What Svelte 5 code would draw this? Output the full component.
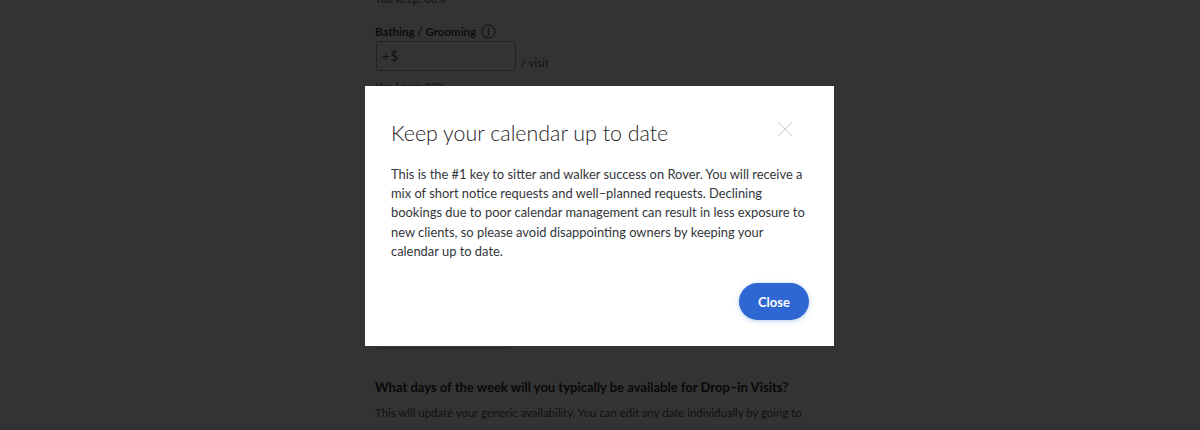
<script>
	const body =
		'This is the #1 key to sitter and walker success on Rover. You will receive a mix of short notice requests and well–planned requests. Declining bookings due to poor calendar management can result in less exposure to new clients, so please avoid disappointing owners by keeping your calendar up to date.';
</script>

<div class="page">
	<p class="keep keep--top">You keep: 80%</p>
	<div class="label">
		Bathing / Grooming
		<svg class="info" viewBox="0 0 16 16" width="15" height="15" aria-hidden="true">
			<circle cx="8" cy="8" r="7" fill="none" stroke="currentColor" stroke-width="1" />
			<path d="M8 7v4.5M6.8 11.5h2.4M7 7h1" fill="none" stroke="currentColor" stroke-width="1" />
			<circle cx="8" cy="4.8" r="0.8" fill="currentColor" />
		</svg>
	</div>
	<div class="rate">
		<div class="input"><span class="input__plus">+</span>$</div>
		<span class="unit">/ visit</span>
	</div>
	<p class="keep">You keep: 80%</p>
	<div class="spacer"></div>
	<div class="input input--ghost"></div>
	<h2>What days of the week will you typically be available for Drop–in Visits?</h2>
	<p class="hint">
		This will update your generic availability. You can edit any date individually by going to
		your calendar.
	</p>
</div>

<div class="overlay">
	<div class="modal">
		<div class="modal__head">
			<h1>Keep your calendar up to date</h1>
			<button type="button" class="modal__x" aria-label="Close">
				<svg viewBox="0 0 16 16" width="16" height="16" aria-hidden="true">
					<path d="M1 1l14 14M15 1L1 15" fill="none" stroke="#c9c9c9" stroke-width="1" />
				</svg>
			</button>
		</div>
		<p class="modal__body">{body}</p>
		<div class="modal__foot">
			<button type="button" class="modal__close">Close</button>
		</div>
	</div>
</div>

<style>
	:global(body) {
		margin: 0;
		height: 430px;
		overflow: hidden;
		background: #fff;
		font-family: Lato, 'Noto Sans', sans-serif;
	}

	.page {
		width: 440px;
		height: 430px;
		overflow: hidden;
		margin-left: 375px;
		color: #55585d;
		font-size: 11.2px;
	}

	.keep {
		margin: 8px 0 0;
		line-height: 16px;
		font-size: 11px;
	}

	.keep--top {
		margin: -9px 0 0;
	}

	.label {
		display: flex;
		align-items: center;
		gap: 5px;
		margin-top: 16px;
		height: 16px;
		font-size: 11.5px;
		font-weight: 700;
		color: #404347;
	}

	.rate {
		display: flex;
		align-items: flex-end;
		gap: 5px;
		margin-top: 2px;
	}

	.input {
		box-sizing: border-box;
		width: 140px;
		height: 30px;
		margin-left: 1px;
		padding: 6px 5px;
		border: 1px solid #aaadb2;
		border-radius: 2px;
		line-height: 16px;
		font-size: 13px;
	}

	.input__plus {
		margin-right: 1px;
	}

	.unit {
		line-height: 16px;
	}

	.spacer {
		height: 224px;
	}

	.input--ghost {
		width: 135px;
	}

	h2 {
		margin: 28px 0 0;
		font-size: 13px;
		line-height: 20px;
		font-weight: 700;
		color: #2b2d30;
	}

	.hint {
		margin: 5px 0 0;
		line-height: 22px;
		font-size: 11.4px;
	}

	.overlay {
		position: fixed;
		inset: 0;
		background: rgba(0, 0, 0, 0.8);
	}

	.modal {
		position: absolute;
		left: 365px;
		top: 86px;
		box-sizing: border-box;
		width: 469px;
		height: 260px;
		padding: 34px 26px 26px;
		background: #fff;
		display: flex;
		flex-direction: column;
		color: #1f2124;
	}

	.modal__head {
		display: flex;
		justify-content: space-between;
		align-items: flex-start;
	}

	h1 {
		margin: 0;
		font-size: 21.4px;
		line-height: 26px;
		font-weight: 300;
	}

	.modal__x {
		padding: 0;
		margin: 1px 15px 0 0;
		border: 0;
		background: none;
		line-height: 0;
	}

	.modal__body {
		margin: 19px 0 0;
		font-size: 12.9px;
		line-height: 19.2px;
		color: #33363a;
	}

	.modal__foot {
		margin-top: auto;
		display: flex;
		justify-content: flex-end;
	}

	.modal__close {
		width: 70px;
		height: 37px;
		margin-right: -1px;
		padding: 1px 0 0;
		border: 0;
		border-radius: 19px;
		background: #2e67d1;
		color: #fff;
		font: 700 13px Lato, 'Noto Sans', sans-serif;
		box-shadow: 0 1px 5px rgba(46, 103, 209, 0.35);
	}
</style>
